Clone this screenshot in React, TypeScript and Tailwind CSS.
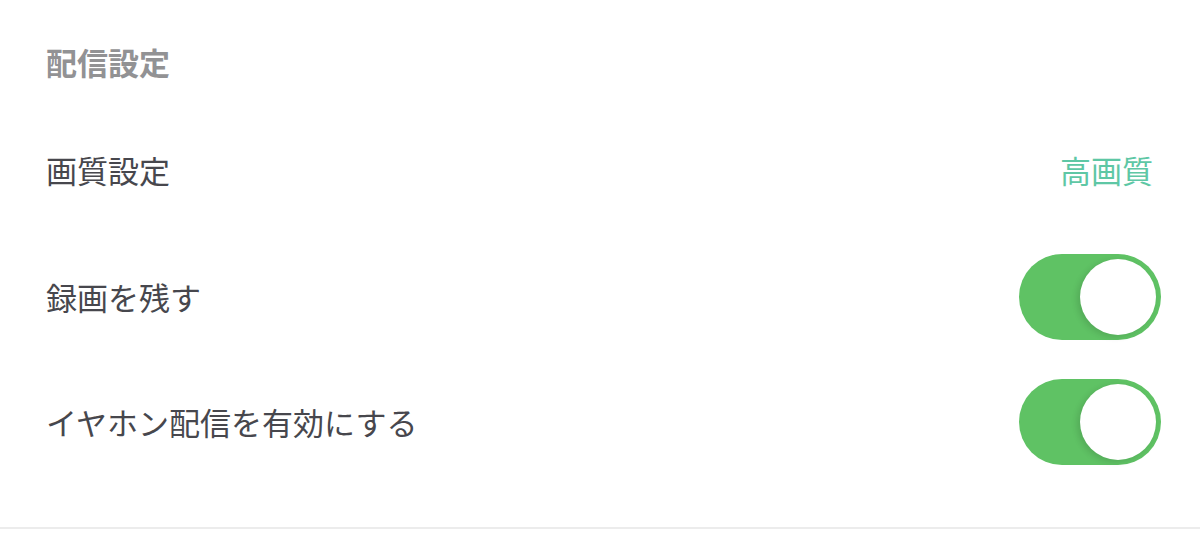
const rows = [
  { label: "録画を残す", on: true },
  { label: "イヤホン配信を有効にする", on: true },
];

function Toggle({ on }: { on: boolean }) {
  return (
    <div
      className={`relative h-[86px] w-[142px] rounded-full ${on ? "bg-[#5fc264]" : "bg-[#e5e5ea]"}`}
    >
      <div
        className={`absolute top-[5px] h-[76px] w-[76px] rounded-full bg-white shadow-[-3px_2px_6px_rgba(0,0,0,0.12)] ${on ? "right-[5px]" : "left-[5px]"}`}
      />
    </div>
  );
}

export default function App() {
  return (
    <div
      className="h-[534px] w-[1200px] bg-white"
      style={{ fontFamily: '"Noto Sans CJK JP", "Noto Sans", sans-serif' }}
    >
      <div className="border-b-2 border-[#ececec] pb-[62px] pl-[46px] pr-[39px] pt-[19px]">
        <div className="flex h-[86px] items-center text-[31px] font-bold text-[#929294]">
          配信設定
        </div>
        <div className="mt-[22px] flex h-[86px] items-center justify-between text-[31px] text-[#47474d]">
          <span>画質設定</span>
          <span className="mr-[8px] text-[#5ec7a5]">高画質</span>
        </div>
        {rows.map((row, i) => (
          <div
            className={`flex h-[86px] items-center justify-between text-[31px] text-[#47474d] ${i === 0 ? "mt-[41px]" : "mt-[39px]"}`}
            key={row.label}
          >
            <span>{row.label}</span>
            <Toggle on={row.on} />
          </div>
        ))}
      </div>
    </div>
  );
}
